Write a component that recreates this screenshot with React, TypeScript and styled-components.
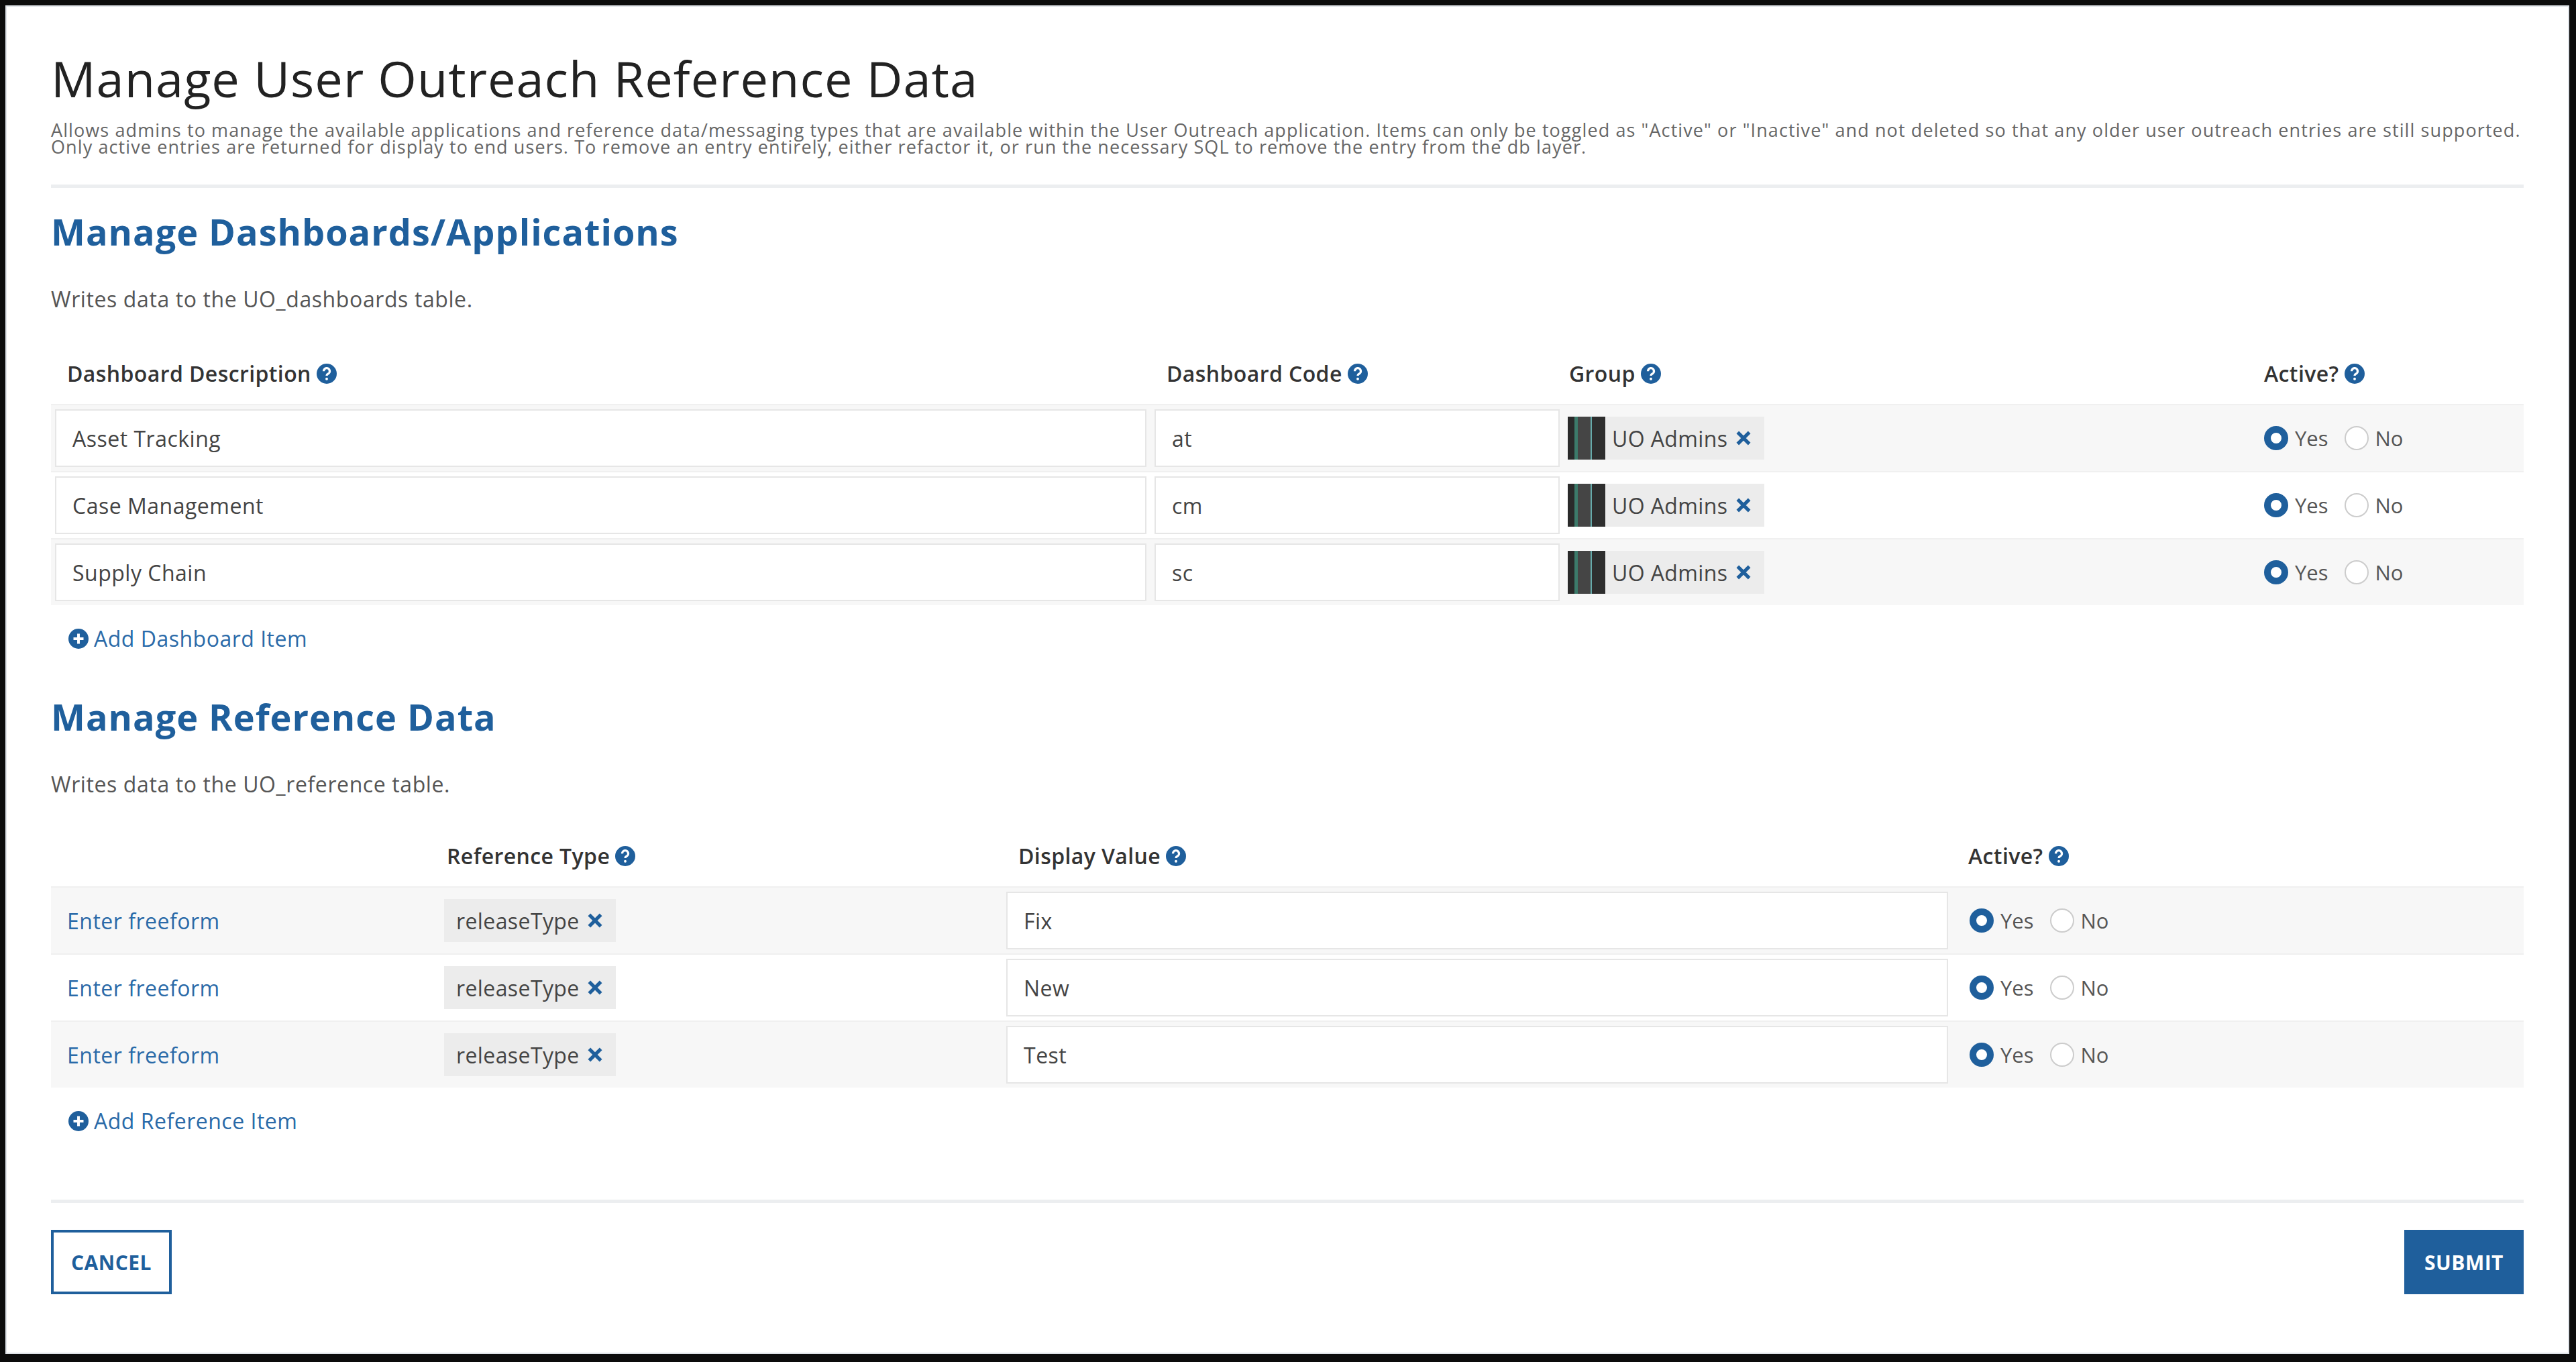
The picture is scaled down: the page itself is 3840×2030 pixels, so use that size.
import React from 'react';
import styled, { createGlobalStyle } from 'styled-components';

const Global = createGlobalStyle`
  html, body { margin: 0; padding: 0; background: #0c0c0c; }
  body { font-family: "Open Sans", "Noto Sans", sans-serif; color: #333; }
  #root { padding: 8px 10px 8px 8px; }
`;

const Card = styled.div`
  background: #fff;
  border: 2px solid #dfe3e8;
  min-height: 2010px;
  box-sizing: border-box;
  padding: 56px 66px 20px 66px;
`;

const Title = styled.h1`
  margin: 0 0 14px;
  font-size: 74px;
  font-weight: 400;
  color: #222;
  letter-spacing: 1px;
`;

const Lead = styled.p`
  margin: 0;
  font-size: 27px;
  line-height: 25px;
  color: #666;
  letter-spacing: 1.1px;
`;

const Rule = styled.hr<{ $m?: string }>`
  border: 0;
  border-top: 5px solid #eceef0;
  margin: ${p => p.$m || '44px 0 0'};
`;

const SectionTitle = styled.h2<{ $top: number }>`
  margin: ${p => p.$top}px 0 0;
  font-size: 54px;
  font-weight: 700;
  color: #1f5f9c;
  letter-spacing: 1px;
`;

const Note = styled.p`
  margin: 42px 0 0;
  font-size: 32px;
  color: #555;
  letter-spacing: 0.6px;
`;

const Table = styled.div<{ $cols: string; $top: number }>`
  display: grid;
  grid-template-columns: ${p => p.$cols};
  margin-top: ${p => p.$top}px;
`;

const Head = styled.div<{ $pad?: number }>`
  display: flex;
  align-items: center;
  gap: 8px;
  font-size: 32px;
  font-weight: 600;
  color: #333;
  padding: 0 0 24px ${p => p.$pad ?? 24}px;
  letter-spacing: 0.4px;
`;

const Cell = styled.div<{ $alt: boolean }>`
  background: ${p => (p.$alt ? '#f7f7f7' : '#fff')};
  height: 100px;
  display: flex;
  align-items: center;
  padding: 0 6px;
  border-top: 2px solid #f0f0f0;
  box-sizing: border-box;
`;

const Input = styled.div`
  flex: 1;
  height: 86px;
  border: 2px solid #e6e6e6;
  background: #fff;
  box-sizing: border-box;
  display: flex;
  align-items: center;
  padding: 0 24px;
  font-size: 32px;
  color: #444;
  letter-spacing: 0.5px;
`;

const Chip = styled.div<{ $avatar?: boolean }>`
  display: flex;
  align-items: center;
  gap: 10px;
  background: #ececec;
  height: 64px;
  padding: 0 18px 0 ${p => (p.$avatar ? 0 : 18)}px;
  font-size: 32px;
  color: #444;
  letter-spacing: 0.4px;
`;

const Avatar = styled.div`
  width: 56px;
  height: 64px;
  background: linear-gradient(90deg, #2a2a2a 0 18%, #3c7a6a 18% 26%, #454545 26% 60%, #6aa 60% 64%, #2e2e2e 64%);
`;

const Link = styled.a`
  font-size: 32px;
  color: #2a6aa8;
  text-decoration: none;
  padding-left: 18px;
  letter-spacing: 0.5px;
`;

const Radios = styled.div<{ $pad: number }>`
  display: flex;
  align-items: center;
  gap: 10px;
  padding-left: ${p => p.$pad}px;
  font-size: 31px;
  color: #555;
`;

const Radio = styled.span<{ $on: boolean }>`
  width: 36px;
  height: 36px;
  border-radius: 50%;
  box-sizing: border-box;
  border: ${p => (p.$on ? '10px solid #1f5f9c' : '2px solid #ccc')};
  background: #fff;
  margin-left: ${p => (p.$on ? 0 : 14)}px;
`;

const AddRow = styled.a`
  display: flex;
  align-items: center;
  gap: 8px;
  margin: 28px 0 0 26px;
  font-size: 32px;
  color: #2a6aa8;
  letter-spacing: 0.5px;
`;

const Footer = styled.div`
  display: flex;
  justify-content: space-between;
  margin-top: 40px;
`;

const Btn = styled.button<{ $primary?: boolean }>`
  height: 96px;
  padding: 0 ${p => (p.$primary ? 26 : 26)}px;
  font-family: inherit;
  font-size: 30px;
  font-weight: 700;
  letter-spacing: 0.5px;
  border: 4px solid #1f5f9c;
  background: ${p => (p.$primary ? '#1f5f9c' : '#fff')};
  color: ${p => (p.$primary ? '#fff' : '#1f5f9c')};
`;

const Help = () => (
  <svg width="30" height="30" viewBox="0 0 20 20">
    <circle cx="10" cy="10" r="10" fill="#1f5f9c" />
    <path d="M7 7.5a3 3 0 1 1 4.2 2.7c-.8.4-1.2.9-1.2 1.8" stroke="#fff" strokeWidth="2.2" fill="none" />
    <circle cx="10" cy="15.2" r="1.3" fill="#fff" />
  </svg>
);

const Plus = () => (
  <svg width="30" height="30" viewBox="0 0 20 20">
    <circle cx="10" cy="10" r="10" fill="#1f5f9c" />
    <path d="M10 5v10M5 10h10" stroke="#fff" strokeWidth="2.6" />
  </svg>
);

const X = () => (
  <svg width="26" height="26" viewBox="0 0 12 12">
    <path d="M2 2l8 8M10 2l-8 8" stroke="#1f5f9c" strokeWidth="2.4" />
  </svg>
);

const Active = ({ pad }: { pad: number }) => (
  <Radios $pad={pad}>
    <Radio $on />Yes<Radio $on={false} />No
  </Radios>
);

const dashboards = [
  ['Asset Tracking', 'at'],
  ['Case Management', 'cm'],
  ['Supply Chain', 'sc'],
];
const refs = ['Fix', 'New', 'Test'];

export default function App() {
  return (
    <>
      <Global />
      <Card>
        <Title>Manage User Outreach Reference Data</Title>
        <Lead>
          Allows admins to manage the available applications and reference data/messaging types that are available within the User Outreach application. Items can only be toggled as "Active" or "Inactive" and not deleted so that any older user outreach entries are still supported. Only active entries are returned for display to end users. To remove an entry entirely, either refactor it, or run the necessary SQL to remove the entry from the db layer.
        </Lead>
        <Rule />

        <SectionTitle $top={28}>Manage Dashboards/Applications</SectionTitle>
        <Note>Writes data to the UO_dashboards table.</Note>
        <Table $cols="1639px 616px 1034px 1fr" $top={68}>
          <Head>Dashboard Description <Help /></Head>
          <Head>Dashboard Code <Help /></Head>
          <Head $pad={8}>Group <Help /></Head>
          <Head $pad={10}>Active? <Help /></Head>
          {dashboards.map(([d, c], i) => (
            <React.Fragment key={d}>
              <Cell $alt={i % 2 === 0}><Input>{d}</Input></Cell>
              <Cell $alt={i % 2 === 0}><Input>{c}</Input></Cell>
              <Cell $alt={i % 2 === 0}>
                <Chip $avatar><Avatar />UO Admins <X /></Chip>
              </Cell>
              <Cell $alt={i % 2 === 0}><Active pad={4} /></Cell>
            </React.Fragment>
          ))}
        </Table>
        <AddRow><Plus />Add Dashboard Item</AddRow>

        <SectionTitle $top={58}>Manage Reference Data</SectionTitle>
        <Note>Writes data to the UO_reference table.</Note>
        <Table $cols="580px 838px 1416px 1fr" $top={64}>
          <Head />
          <Head $pad={10}>Reference Type <Help /></Head>
          <Head $pad={24}>Display Value <Help /></Head>
          <Head $pad={24}>Active? <Help /></Head>
          {refs.map((r, i) => (
            <React.Fragment key={r}>
              <Cell $alt={i % 2 === 0}><Link>Enter freeform</Link></Cell>
              <Cell $alt={i % 2 === 0}><Chip>releaseType <X /></Chip></Cell>
              <Cell $alt={i % 2 === 0}><Input>{r}</Input></Cell>
              <Cell $alt={i % 2 === 0}><Active pad={20} /></Cell>
            </React.Fragment>
          ))}
        </Table>
        <AddRow><Plus />Add Reference Item</AddRow>

        <Rule $m="96px 0 0" />
        <Footer>
          <Btn>CANCEL</Btn>
          <Btn $primary>SUBMIT</Btn>
        </Footer>
      </Card>
    </>
  );
}
